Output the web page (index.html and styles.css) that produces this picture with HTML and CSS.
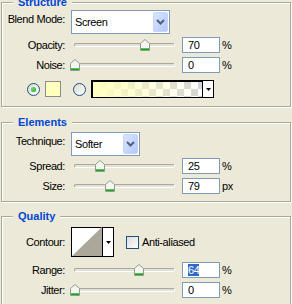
FILE: index.html
```html
<!DOCTYPE html>
<html lang="en">
<head>
    <meta charset="UTF-8">
    <meta name="viewport" content="width=device-width, initial-scale=1.0">
    <title>Outer Glow</title>
    <link rel="stylesheet" href="styles.css">
</head>
<body>
    <!-- shared shapes -->
    <svg class="defs" aria-hidden="true">
        <defs>
            <linearGradient id="radioFill" x1="0" y1="0" x2="1" y2="1">
                <stop offset="0" stop-color="#d8d8d2"/>
                <stop offset="1" stop-color="#ffffff"/>
            </linearGradient>
            <symbol id="thumb" viewBox="0 0 10 12">
                <path d="M0.5 11.5V4.5L5 0.5L9.5 4.5V11.5Z" fill="#f5f5f1" stroke="#8e9e8e"/>
                <rect x="1" y="9" width="8" height="1" fill="#55c655"/>
                <rect x="1" y="10" width="8" height="1" fill="#21a121"/>
            </symbol>
            <symbol id="chevron" viewBox="0 0 9 6">
                <path d="M1 1L4.5 4.5L8 1" fill="none" stroke="#4d6185" stroke-width="2"/>
            </symbol>
            <symbol id="caret" viewBox="0 0 5 3">
                <path d="M0 0H5L2.5 3Z" fill="#000"/>
            </symbol>
            <symbol id="radio" viewBox="0 0 13 13">
                <circle cx="6.5" cy="6.5" r="6" fill="url(#radioFill)" stroke="#1c5180"/>
            </symbol>
        </defs>
    </svg>

    <fieldset class="group group-structure">
        <legend>Structure</legend>
        <div class="row row-select">
            <span class="label">Blend Mode:</span>
            <div class="select select-wide">
                <span class="select-text">Screen</span>
                <span class="select-btn"><svg width="9" height="6"><use href="#chevron"/></svg></span>
            </div>
        </div>
        <div class="row row-slider row-first">
            <span class="label">Opacity:</span>
            <div class="slider">
                <div class="track"></div>
                <svg class="thumb" width="10" height="12" style="left: 70px"><use href="#thumb"/></svg>
            </div>
            <div class="num">70</div>
            <span class="unit">%</span>
        </div>
        <div class="row row-slider">
            <span class="label">Noise:</span>
            <div class="slider">
                <div class="track"></div>
                <svg class="thumb" width="10" height="12" style="left: 0px"><use href="#thumb"/></svg>
            </div>
            <div class="num">0</div>
            <span class="unit">%</span>
        </div>
        <div class="row row-color">
            <span class="radio">
                <svg width="13" height="13"><use href="#radio"/></svg>
                <span class="radio-dot"></span>
            </span>
            <div class="swatch"></div>
            <span class="radio radio-second">
                <svg width="13" height="13"><use href="#radio"/></svg>
            </span>
            <div class="gradient">
                <div class="gradient-fill"></div>
                <div class="caret-box"><svg width="5" height="3"><use href="#caret"/></svg></div>
            </div>
        </div>
    </fieldset>

    <fieldset class="group group-elements">
        <legend>Elements</legend>
        <div class="row row-select">
            <span class="label">Technique:</span>
            <div class="select select-narrow">
                <span class="select-text">Softer</span>
                <span class="select-btn"><svg width="9" height="6"><use href="#chevron"/></svg></span>
            </div>
        </div>
        <div class="row row-slider row-first">
            <span class="label">Spread:</span>
            <div class="slider">
                <div class="track"></div>
                <svg class="thumb" width="10" height="12" style="left: 25px"><use href="#thumb"/></svg>
            </div>
            <div class="num">25</div>
            <span class="unit">%</span>
        </div>
        <div class="row row-slider">
            <span class="label">Size:</span>
            <div class="slider">
                <div class="track"></div>
                <svg class="thumb" width="10" height="12" style="left: 35px"><use href="#thumb"/></svg>
            </div>
            <div class="num">79</div>
            <span class="unit">px</span>
        </div>
    </fieldset>

    <fieldset class="group group-quality">
        <legend>Quality</legend>
        <div class="row row-contour">
            <span class="label">Contour:</span>
            <div class="contour">
                <svg class="contour-preview" width="30" height="29">
                    <polygon points="0,29 30,0 30,29" fill="#aca899"/>
                </svg>
                <div class="caret-box"><svg width="5" height="3"><use href="#caret"/></svg></div>
            </div>
            <span class="checkbox"></span>
            <span class="check-label">Anti-aliased</span>
        </div>
        <div class="row row-slider row-range">
            <span class="label">Range:</span>
            <div class="slider">
                <div class="track"></div>
                <svg class="thumb" width="10" height="12" style="left: 64px"><use href="#thumb"/></svg>
            </div>
            <div class="num"><span class="selected">64</span></div>
            <span class="unit">%</span>
        </div>
        <div class="row row-slider">
            <span class="label">Jitter:</span>
            <div class="slider">
                <div class="track"></div>
                <svg class="thumb" width="10" height="12" style="left: 0px"><use href="#thumb"/></svg>
            </div>
            <div class="num">0</div>
            <span class="unit">%</span>
        </div>
    </fieldset>
</body>
</html>
```

FILE: styles.css
```css
body {
    margin: 0;
    background-color: #ece9d8;
    font-family: Tahoma, "Liberation Sans", Arial, sans-serif;
    font-size: 11px;
    line-height: 13px;
    letter-spacing: -0.4px;
    color: #000;
    overflow: hidden;
}

.defs {
    position: absolute;
    width: 0;
    height: 0;
}

/* group boxes */
.group {
    margin: 0 1px;
    padding: 0 0 8px 0;
    min-width: 0;
    border: 1px solid #aca899;
    box-shadow: inset 1px 1px 0 #fff, 1px 1px 0 #fff;
}

.group legend {
    margin-left: 11px;
    padding: 0 5px;
    font-weight: bold;
    line-height: 13px;
    letter-spacing: 0;
    color: #0046d5;
    background-color: #ece9d8;
}

.group-structure {
    margin-top: -4px;
}

.group-elements {
    margin-top: 9px;
    padding-bottom: 7px;
}

.group-quality {
    margin-top: 8px;
    padding-bottom: 20px;
}

/* rows */
.row {
    display: flex;
    align-items: center;
}

.label {
    flex: none;
    width: 63px;
    text-align: right;
}

.row-select {
    align-items: flex-start;
    margin-top: 1px;
}

.row-select .label {
    padding-top: 3px;
}

.group-elements .row-select {
    margin-top: 3px;
}

.row-slider {
    height: 16px;
    margin-top: 4px;
}

.row-slider.row-first {
    margin-top: 3px;
}

.group-elements .row-slider.row-first {
    margin-top: 2px;
}

.row-range {
    margin-top: 5px;
}

/* combo boxes */
.select {
    display: flex;
    align-items: center;
    box-sizing: border-box;
    height: 24px;
    margin-left: 6px;
    border: 1px solid #7f9db9;
    background-color: #fff;
}

.select-wide {
    width: 99px;
}

.select-narrow {
    width: 69px;
}

.select-text {
    flex: 1;
    padding-left: 3px;
}

.select-btn {
    display: flex;
    align-items: center;
    justify-content: center;
    box-sizing: border-box;
    width: 15px;
    height: 20px;
    margin-right: 1px;
    border: 1px solid #c6d5fc;
    border-radius: 2px;
    background: linear-gradient(to bottom right, #dae5fe, #b4c8f6);
}

/* sliders */
.slider {
    position: relative;
    flex: none;
    width: 108px;
    height: 16px;
    margin-left: 5px;
}

.track {
    box-sizing: border-box;
    width: 101px;
    height: 4px;
    margin: 6px 0 0 4px;
    border: 1px solid;
    border-color: #aca899 #fff #fff #aca899;
    border-radius: 2px;
    background-color: #e3e1d6;
}

.thumb {
    position: absolute;
    top: 2px;
}

.num {
    box-sizing: border-box;
    width: 38px;
    height: 16px;
    margin-left: 4px;
    padding-left: 5px;
    border: 1px solid #7f9db9;
    background-color: #fff;
    line-height: 14px;
}

.num .selected {
    background-color: #316ac5;
    color: #fff;
}

.unit {
    margin-left: 2px;
}

/* colour row */
.row-color {
    height: 18px;
    margin-top: 7px;
}

.radio {
    position: relative;
    display: flex;
    margin-left: 25px;
}

.radio-second {
    margin-left: 12px;
}

.radio-dot {
    position: absolute;
    left: 4px;
    top: 4px;
    width: 5px;
    height: 5px;
    border-radius: 50%;
    background: radial-gradient(circle at 35% 35%, #6fd96f, #21a121);
}

.swatch {
    box-sizing: border-box;
    width: 16px;
    height: 16px;
    margin-left: 5px;
    border: 1px solid #8c8c8c;
    background-color: #ffffbe;
}

.gradient {
    display: flex;
    box-sizing: border-box;
    width: 123px;
    height: 18px;
    margin-left: 5px;
    border: 1px solid #000;
    box-shadow: inset 1px 1px 0 #000;
}

.gradient-fill {
    flex: 1;
    margin: 1px 0 0 1px;
    border-right: 1px solid #000;
    background-image:
        linear-gradient(to right, #ffffbe, rgba(255, 255, 190, 0)),
        conic-gradient(#d4d4d4 0 25%, #fff 0 50%, #d4d4d4 0 75%, #fff 0);
    background-size: 100% 100%, 14px 14px;
}

.caret-box {
    display: flex;
    align-items: center;
    justify-content: center;
    width: 10px;
    background-color: #fff;
}

/* contour */
.row-contour {
    height: 30px;
    margin-top: 4px;
}

.contour {
    display: flex;
    box-sizing: border-box;
    width: 43px;
    height: 30px;
    margin-left: 6px;
    border: 1px solid #000;
    background-color: #fff;
}

.contour-preview {
    display: block;
    align-self: flex-end;
    border-right: 1px solid #000;
}

.checkbox {
    box-sizing: border-box;
    width: 13px;
    height: 13px;
    margin-left: 12px;
    border: 1px solid #1c5180;
    background: linear-gradient(to bottom right, #dcdcd7, #fff);
}

.check-label {
    margin-left: 3px;
}
```
